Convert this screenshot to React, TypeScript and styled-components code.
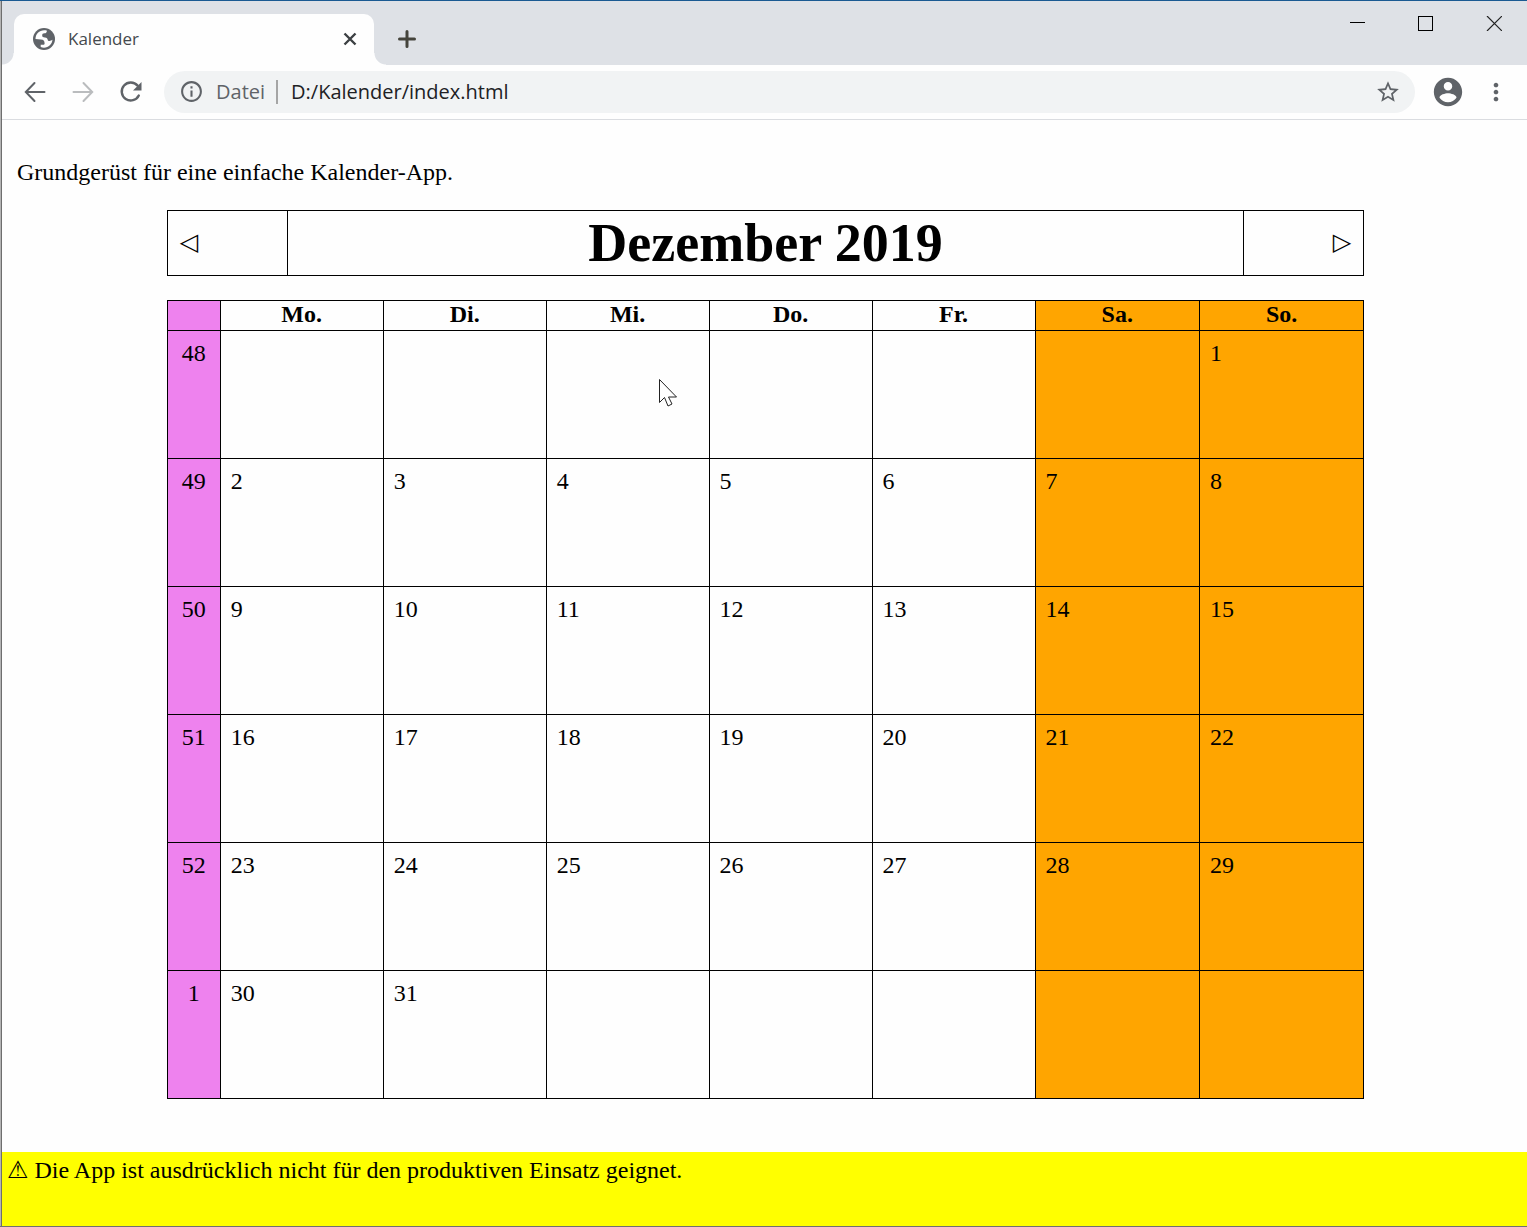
import React from "react";
import styled, { createGlobalStyle } from "styled-components";

const GlobalStyle = createGlobalStyle`
  *, *::before, *::after { box-sizing: border-box; }
  body { margin: 0; background: #fefefe; }
`;

const uiFont = `"Open Sans", "Noto Sans", sans-serif`;
const pageFont = `"Liberation Serif", "Times New Roman", serif`;

const Window = styled.div`
  position: relative;
  display: flex;
  flex-direction: column;
  min-height: 100vh;
  border-top: 1px solid #1a5a92;
  border-bottom: 1px solid #707070;
  background: #fefefe;
  padding-left: 2px;
  &::before {
    content: "";
    position: absolute;
    inset: 0 auto 0 0;
    width: 2px;
    border-left: 1px solid #b4b4b4;
    border-right: 1px solid #6e6e6e;
  }
`;

const TabStrip = styled.header`
  display: flex;
  align-items: flex-end;
  height: 64px;
  padding-left: 12px;
  background: #dee1e6;
`;

const Tab = styled.div`
  position: relative;
  display: flex;
  align-items: center;
  width: 360px;
  height: 51px;
  padding: 0 13px 2px 19px;
  border-radius: 10px 10px 0 0;
  background: #fefefe;
  &::before,
  &::after {
    content: "";
    position: absolute;
    bottom: 0;
    width: 12px;
    height: 12px;
  }
  &::before {
    right: 100%;
    background: radial-gradient(circle at 0 0, #dee1e6 11px, #fefefe 12px);
  }
  &::after {
    left: 100%;
    background: radial-gradient(circle at 100% 0, #dee1e6 11px, #fefefe 12px);
  }
`;

const TabTitle = styled.span`
  flex: 1;
  padding-left: 13px;
  font: 17px/24px ${uiFont};
  color: #45494d;
`;

const IconButton = styled.button<{ $width: number; $height: number; $color?: string }>`
  display: flex;
  flex: none;
  align-items: center;
  justify-content: center;
  width: ${(p) => p.$width}px;
  height: ${(p) => p.$height}px;
  padding: 0;
  border: 0;
  background: transparent;
  color: ${(p) => p.$color ?? "#5f6368"};
  svg { display: block; }
`;

const NewTab = styled.div`
  padding-left: 12px;
`;

const WindowControls = styled.div`
  display: flex;
  align-self: flex-start;
  margin-left: auto;
`;

const Toolbar = styled.nav`
  display: flex;
  align-items: center;
  height: 55px;
  padding: 0 7px 1px 9px;
  border-bottom: 1px solid #dadce0;
`;

const AddressBar = styled.div`
  display: flex;
  flex: 1;
  align-items: center;
  height: 42px;
  margin: 0 9px;
  padding: 0 3px 0 15px;
  border-radius: 21px;
  background: #f1f3f4;
  font: 20px/28px ${uiFont};
  color: #5f6368;
`;

const Scheme = styled.span`
  margin: 0 11px 0 12px;
`;

const Separator = styled.span`
  width: 2px;
  height: 24px;
  background: #a5a5a5;
`;

const AddressInput = styled.input`
  flex: 1;
  min-width: 0;
  padding: 0 0 0 13px;
  border: 0;
  outline: 0;
  background: transparent;
  font: inherit;
  color: #202124;
`;

const Page = styled.main`
  flex: 1;
  padding: 38px 13px 53px 15px;
  font: 24px/28px ${pageFont};
  color: #000;
`;

const Intro = styled.p`
  margin: 0 0 24px;
`;

const MonthBar = styled.div`
  display: grid;
  grid-template-columns: 119px 1fr 119px;
  width: 80%;
  height: 66px;
  margin: 0 auto 24px;
  border: 1px solid #000;
`;

const MonthTitle = styled.h1`
  margin: 0;
  border: solid #000;
  border-width: 0 1px;
  font: bold 54px/64px ${pageFont};
  text-align: center;
`;

const MonthButton = styled.button<{ $align: "left" | "right" }>`
  padding: 0 12px 2px;
  border: 0;
  background: transparent;
  font: 24px/28px "DejaVu Sans", sans-serif;
  color: #000;
  text-align: ${(p) => p.$align};
`;

const Calendar = styled.table`
  width: 80%;
  margin: 0 auto;
  border-collapse: collapse;
  table-layout: fixed;
`;

type Tone = "plain" | "weekend";

const fill = (tone: Tone) => (tone === "weekend" ? "#ffa500" : "transparent");

const CornerHead = styled.td`
  width: 53px;
  border: 1px solid #000;
  background: #ee82ee;
`;

const DayHead = styled.th<{ $tone: Tone }>`
  width: ${(p) => (p.$tone === "plain" ? "13.62%" : "auto")};
  height: 30px;
  padding: 0 0 2px;
  border: 1px solid #000;
  background: ${(p) => fill(p.$tone)};
  line-height: 27px;
`;

const WeekHead = styled.th`
  padding: 8px 0;
  border: 1px solid #000;
  background: #ee82ee;
  font-weight: normal;
  text-align: center;
  vertical-align: top;
`;

const Day = styled.td<{ $tone: Tone }>`
  height: 128px;
  padding: 8px 10px;
  border: 1px solid #000;
  background: ${(p) => fill(p.$tone)};
  vertical-align: top;
`;

const Notice = styled.footer`
  height: 74px;
  padding: 4px 5px;
  background: #ff0;
  font: 24px/28px ${pageFont};
  color: #000;
`;

const WarningSign = styled.span`
  font-family: "DejaVu Sans", sans-serif;
`;

const Pointer = styled.svg`
  position: absolute;
  left: 658px;
  top: 377px;
  pointer-events: none;
`;

const MaterialIcon = ({ d, size = 28 }: { d: string; size?: number }) => (
  <svg width={size} height={size} viewBox="0 0 24 24" fill="currentColor" aria-hidden="true">
    <path d={d} />
  </svg>
);

const LineIcon = ({ d }: { d: string }) => (
  <svg
    width="22"
    height="22"
    viewBox="0 0 22 22"
    fill="none"
    stroke="currentColor"
    strokeWidth="2"
    strokeLinecap="round"
    aria-hidden="true"
  >
    <path d={d} />
  </svg>
);

const icons = {
  info: "M11 7h2v2h-2zm0 4h2v6h-2zm1-9C6.480 2 2 6.480 2 12s4.480 10 10 10 10-4.480 10-10S17.520 2 12 2zm0 18c-4.410 0-8-3.590-8-8s3.590-8 8-8 8 3.590 8 8-3.590 8-8 8z",
  star: "M22 9.240l-7.190-.620L12 2 9.190 8.630 2 9.240l5.460 4.730L5.820 21 12 17.270 18.180 21l-1.630-7.030L22 9.240zM12 15.400l-3.760 2.270 1-4.280-3.320-2.880 4.380-.380L12 6.100l1.710 4.040 4.380.380-3.320 2.880 1 4.280L12 15.400z",
  person:
    "M12 2C6.480 2 2 6.480 2 12s4.480 10 10 10 10-4.480 10-10S17.520 2 12 2zm0 3c1.660 0 3 1.340 3 3s-1.340 3-3 3-3-1.340-3-3 1.340-3 3-3zm0 14.200c-2.500 0-4.710-1.280-6-3.220.030-1.990 4-3.080 6-3.080 1.990 0 5.970 1.090 6 3.080-1.290 1.940-3.500 3.220-6 3.220z",
  menu: "M12 8c1.100 0 2-.900 2-2s-.900-2-2-2-2 .900-2 2 .900 2 2 2zm0 2c-1.100 0-2 .900-2 2s.900 2 2 2 2-.900 2-2-.900-2-2-2zm0 6c-1.100 0-2 .900-2 2s.900 2 2 2 2-.900 2-2-.900-2-2-2z",
};

const dayNames = ["Mo.", "Di.", "Mi.", "Do.", "Fr.", "Sa.", "So."];
const weekNumbers = [48, 49, 50, 51, 52, 1];
const firstOffset = 6;
const daysInMonth = 31;

const toneOf = (column: number): Tone => (column > 4 ? "weekend" : "plain");

const dayAt = (row: number, column: number) => {
  const day = row * 7 + column - firstOffset + 1;
  return day >= 1 && day <= daysInMonth ? day : "";
};

export default function App() {
  return (
    <Window>
      <GlobalStyle />
      <TabStrip>
        <Tab>
          <svg width="22" height="22" viewBox="0 0 22 22" aria-hidden="true">
            <circle cx="11" cy="11" r="11" fill="#5f6368" />
            <path
              d="M2.500 11c0-5 3.700-8.700 8.700-8.700 1 0 1.900.100 2.800.400-.300 1.700-1 2.500-2.600 2.600-1.600 0-2.200.700-2.200 2.200 0 1.500 1 1.900 2.700 1.900 2 0 2.600.900 2.800 2.400.200 1.500 1.300 1.200 2.500.9 1.200-.3 1.900-.600 2.300-1.200-.200 4.400-3.900 8.200-8.500 8.200-1.200 0-2.300-.2-3.300-.6v-2.300h2.500c.9 0 1.400-.5 1.400-1.400 0-2.600-1.100-3.700-3.700-3.900z"
              fill="#fefefe"
            />
          </svg>
          <TabTitle>Kalender</TabTitle>
          <IconButton type="button" aria-label="Tab schließen" $width={22} $height={22} $color="#3c4043">
            <svg width="14" height="14" viewBox="0 0 14 14" stroke="currentColor" strokeWidth="2.400">
              <path d="M1.500 1.500l11 11M12.500 1.500l-11 11" />
            </svg>
          </IconButton>
        </Tab>
        <NewTab>
          <IconButton type="button" aria-label="Neuer Tab" $width={42} $height={52} $color="#45443c">
            <svg width="18" height="18" viewBox="0 0 18 18" stroke="currentColor" strokeWidth="3" strokeLinecap="round">
              <path d="M9 1.500v15M1.500 9h15" />
            </svg>
          </IconButton>
        </NewTab>
        <WindowControls>
          <IconButton type="button" aria-label="Minimieren" $width={68} $height={44} $color="#000">
            <svg width="15" height="15" viewBox="0 0 15 15" stroke="currentColor">
              <path d="M0 6.500h15" />
            </svg>
          </IconButton>
          <IconButton type="button" aria-label="Maximieren" $width={68} $height={44} $color="#000">
            <svg width="15" height="15" viewBox="0 0 15 15" fill="none" stroke="currentColor">
              <rect x=".5" y=".5" width="14" height="14" />
            </svg>
          </IconButton>
          <IconButton type="button" aria-label="Schließen" $width={68} $height={44} $color="#222">
            <svg width="17" height="15" viewBox="-2 0 17 15" stroke="currentColor" strokeWidth="1.200">
              <path d="M0 0l15 15M15 0L0 15" />
            </svg>
          </IconButton>
        </WindowControls>
      </TabStrip>

      <Toolbar aria-label="Navigation">
        <IconButton type="button" aria-label="Zurück" $width={48} $height={42}>
          <LineIcon d="M20.500 11H2M10.500 2L1.800 11l8.700 9" />
        </IconButton>
        <IconButton type="button" aria-label="Vorwärts" $width={48} $height={42} $color="#babcbe">
          <LineIcon d="M1.500 11H20M11.500 2l8.700 9-8.700 9" />
        </IconButton>
        <IconButton type="button" aria-label="Neu laden" $width={48} $height={42}>
          <svg width="22" height="22" viewBox="0 0 22 22" fill="none" aria-hidden="true">
            <path
              d="M17.600 4.600A9 9 0 1 0 18.800 14.500"
              stroke="currentColor"
              strokeWidth="2.400"
              strokeLinecap="round"
            />
            <path d="M21.500 1v8.500H13z" fill="currentColor" />
          </svg>
        </IconButton>
        <AddressBar>
          <MaterialIcon d={icons.info} size={25} />
          <Scheme>Datei</Scheme>
          <Separator />
          <AddressInput aria-label="Adresse" defaultValue="D:/Kalender/index.html" />
          <IconButton type="button" aria-label="Lesezeichen" $width={48} $height={42}>
            <MaterialIcon d={icons.star} size={26} />
          </IconButton>
        </AddressBar>
        <IconButton type="button" aria-label="Profil" $width={48} $height={42}>
          <MaterialIcon d={icons.person} size={34} />
        </IconButton>
        <IconButton type="button" aria-label="Menü" $width={48} $height={42}>
          <MaterialIcon d={icons.menu} />
        </IconButton>
      </Toolbar>

      <Page>
        <Intro>Grundgerüst für eine einfache Kalender-App.</Intro>
        <MonthBar>
          <MonthButton type="button" aria-label="Vorheriger Monat" $align="left">◁</MonthButton>
          <MonthTitle>Dezember 2019</MonthTitle>
          <MonthButton type="button" aria-label="Nächster Monat" $align="right">▷</MonthButton>
        </MonthBar>
        <Calendar>
          <thead>
            <tr>
              <CornerHead />
              {dayNames.map((name, column) => (
                <DayHead key={name} scope="col" $tone={toneOf(column)}>
                  {name}
                </DayHead>
              ))}
            </tr>
          </thead>
          <tbody>
            {weekNumbers.map((week, row) => (
              <tr key={week}>
                <WeekHead scope="row">{week}</WeekHead>
                {dayNames.map((name, column) => (
                  <Day key={name} $tone={toneOf(column)}>
                    {dayAt(row, column)}
                  </Day>
                ))}
              </tr>
            ))}
          </tbody>
        </Calendar>
      </Page>

      <Notice>
        <WarningSign>⚠</WarningSign> Die App ist ausdrücklich nicht für den produktiven Einsatz geignet.
      </Notice>

      <Pointer width="20" height="30" viewBox="0 0 20 30" aria-hidden="true">
        <path
          d="M1.500 1.500v23l5-5 3.500 8.500 4-2-3.500-7h8z"
          fill="#fff"
          stroke="#222"
          strokeWidth="1"
        />
      </Pointer>
    </Window>
  );
}
